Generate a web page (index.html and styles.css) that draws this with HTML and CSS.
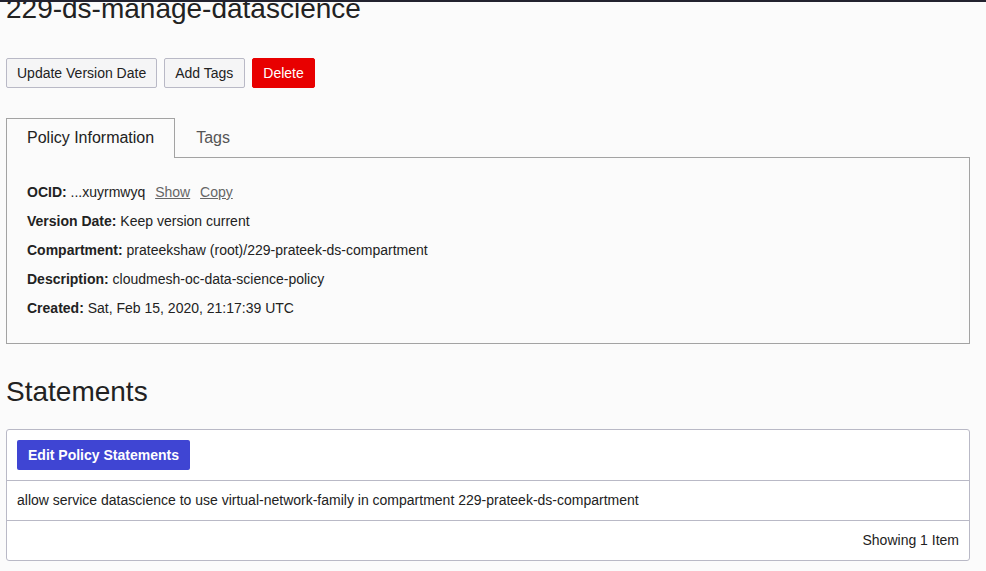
FILE: index.html
```html
<!DOCTYPE html>
<html>
<head>
<meta charset="utf-8">
<link rel="stylesheet" href="styles.css">
</head>
<body>
<div class="topbar"></div>
<main class="page">
  <h1 class="title">229-ds-manage-datascience</h1>
  <div class="actions">
    <button class="btn">Update Version Date</button>
    <button class="btn btn-tags">Add Tags</button>
    <button class="btn btn-danger">Delete</button>
  </div>
  <div class="tabs">
    <div class="tab tab-active">Policy Information</div>
    <div class="tab">Tags</div>
  </div>
  <section class="panel">
    <div class="row"><b>OCID:</b> ...xuyrmwyq <a class="link">Show</a> <a class="link">Copy</a></div>
    <div class="row"><b>Version Date:</b> Keep version current</div>
    <div class="row"><b>Compartment:</b> prateekshaw (root)/229-prateek-ds-compartment</div>
    <div class="row"><b>Description:</b> cloudmesh-oc-data-science-policy</div>
    <div class="row"><b>Created:</b> Sat, Feb 15, 2020, 21:17:39 UTC</div>
  </section>
  <h2 class="section-title">Statements</h2>
  <section class="table">
    <div class="table-head"><button class="btn-primary">Edit Policy Statements</button></div>
    <div class="table-row">allow service datascience to use virtual-network-family in compartment 229-prateek-ds-compartment</div>
    <div class="table-foot">Showing 1 Item</div>
  </section>
</main>
</body>
</html>
```
FILE: styles.css
```css
html, body {
  margin: 0;
  padding: 0;
  background: #fbfbfb;
  font-family: "Liberation Sans", Arial, sans-serif;
  color: #222;
  overflow: hidden;
}
.topbar {
  position: absolute;
  top: 0;
  left: 0;
  right: 0;
  height: 2px;
  background: #23232f;
}
.page {
  padding: 0 16px 0 6px;
}
.title {
  margin: -7px 0 0 0;
  font-size: 28px;
  font-weight: normal;
  line-height: 32px;
  color: #222;
}
.actions {
  display: flex;
  gap: 7px;
  margin-top: 33px;
}
.btn {
  font-family: inherit;
  font-size: 14px;
  line-height: 16px;
  padding: 6px 10px;
  border: 1px solid #b9b9c6;
  border-radius: 2px;
  background: #f5f5f6;
  color: #222;
  height: 30px;
}
.btn-tags {
  padding: 6px 11px 6px 10px;
}
.btn-danger {
  background: #e80000;
  border-color: #e80000;
  color: #fff;
}
.tabs {
  display: flex;
  margin-top: 30px;
}
.tab {
  font-size: 16px;
  line-height: 20px;
  padding: 9px 20px 9px;
  color: #555;
  border: 1px solid transparent;
  border-bottom: none;
}
.tab-active {
  color: #222;
  border-color: #a3a3a3;
  background: #fbfbfb;
  margin-bottom: -1px;
  position: relative;
  z-index: 1;
}
.panel {
  border: 1px solid #a3a3a3;
  padding: 24px 20px 25px;
  font-size: 14px;
}
.row {
  line-height: 20px;
  margin-bottom: 9px;
}
.row:last-child {
  margin-bottom: 0;
}
.row b {
  font-weight: bold;
  color: #222;
}
.link {
  color: #666;
  text-decoration: underline;
  margin-left: 6px;
}
.section-title {
  font-size: 28px;
  font-weight: normal;
  line-height: 32px;
  margin: 32px 0 0;
  color: #222;
}
.table {
  margin-top: 21px;
  border: 1px solid #b9b9c6;
  border-radius: 3px;
  background: #fff;
  font-size: 14px;
}
.table-head {
  padding: 10px;
  border-bottom: 1px solid #b9b9c6;
}
.btn-primary {
  font-family: inherit;
  font-size: 14px;
  font-weight: bold;
  line-height: 16px;
  height: 30px;
  padding: 6px 11px;
  background: #3f45d3;
  color: #fff;
  border: none;
  border-radius: 2px;
}
.table-row {
  padding: 10px;
  line-height: 19px;
  border-bottom: 1px solid #b9b9c6;
}
.table-foot {
  padding: 10px;
  line-height: 19px;
  text-align: right;
}
```
